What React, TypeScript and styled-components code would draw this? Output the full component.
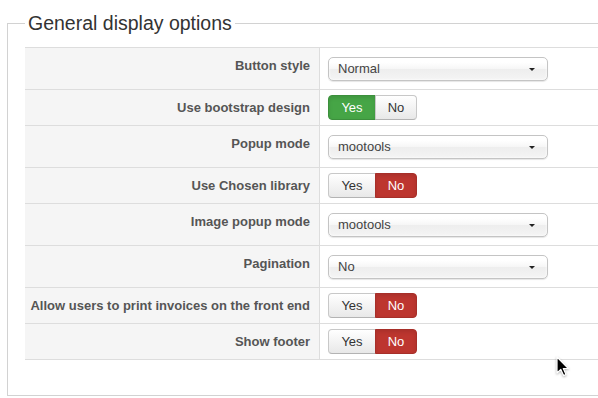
import styled, { createGlobalStyle, css } from 'styled-components';

const GlobalStyle = createGlobalStyle`
	html, body {
		margin: 0;
		padding: 0;
		overflow: hidden;
		background: #fff;
		font-family: 'Liberation Sans', Arial, Helvetica, sans-serif;
	}
`;

type Option =
	| { label: string; kind: 'select'; value: string }
	| { label: string; kind: 'toggle'; value: 'yes' | 'no'; yesColor?: 'green' };

const options: Option[] = [
	{ label: 'Button style', kind: 'select', value: 'Normal' },
	{ label: 'Use bootstrap design', kind: 'toggle', value: 'yes' },
	{ label: 'Popup mode', kind: 'select', value: 'mootools' },
	{ label: 'Use Chosen library', kind: 'toggle', value: 'no' },
	{ label: 'Image popup mode', kind: 'select', value: 'mootools' },
	{ label: 'Pagination', kind: 'select', value: 'No' },
	{ label: 'Allow users to print invoices on the front end', kind: 'toggle', value: 'no' },
	{ label: 'Show footer', kind: 'toggle', value: 'no' },
];

function App() {
	return (
		<>
			<GlobalStyle />
			<Fieldset>
				<Legend>General display options</Legend>
				<Table>
					{options.map((opt) => (
						<Row key={opt.label} $tall={opt.kind === 'select'}>
							<LabelCell>{opt.label}</LabelCell>
							<ControlCell>
								{opt.kind === 'select' ? (
									<Select>
										<span>{opt.value}</span>
										<Caret />
									</Select>
								) : (
									<ToggleGroup>
										<ToggleButton $state={opt.value === 'yes' ? 'yes' : 'off'} $first>
											Yes
										</ToggleButton>
										<ToggleButton $state={opt.value === 'no' ? 'no' : 'off'}>
											No
										</ToggleButton>
									</ToggleGroup>
								)}
							</ControlCell>
						</Row>
					))}
				</Table>
			</Fieldset>
			<Cursor width='14' height='22' viewBox='0 0 14 22'>
				<path
					d='M1 1 L1 17 L4.8 13.4 L7.6 19.6 L10 18.5 L7.3 12.5 L12.4 12.5 Z'
					fill='#000'
					stroke='#fff'
					strokeWidth='1.2'
					strokeLinejoin='round'
				/>
			</Cursor>
		</>
	);
}

export default App;

const Fieldset = styled.fieldset`
	margin: 11px 0 0 7px;
	padding: 12px 0 35px 17px;
	border: 1px solid #d2d2d2;
	width: 640px;
	min-width: 0;
`;

const Legend = styled.legend`
	font-size: 19.5px;
	line-height: 24px;
	color: #333;
	padding: 0 3px;
`;

const Table = styled.div`
	display: flex;
	flex-direction: column;
	border-top: 1px solid #ddd;
`;

const Row = styled.div<{ $tall: boolean }>`
	display: grid;
	grid-template-columns: 295px 1fr;
	height: ${(p) => (p.$tall ? 42 : 36)}px;
	box-sizing: border-box;
	border-bottom: 1px solid #ddd;
`;

const LabelCell = styled.div`
	background: #f5f5f5;
	border-right: 1px solid #ddd;
	text-align: right;
	padding: 9px 9px 0 0;
	font-size: 13px;
	line-height: 18px;
	font-weight: bold;
	color: #555;
	white-space: nowrap;
`;

const ControlCell = styled.div`
	display: flex;
	align-items: center;
	padding-left: 8px;
`;

const Select = styled.div`
	box-sizing: border-box;
	width: 220px;
	height: 24px;
	display: flex;
	align-items: center;
	justify-content: space-between;
	padding: 0 12px 0 9px;
	border: 1px solid #c4c4c4;
	border-radius: 5px;
	background: linear-gradient(#fff 20%, #f6f6f6 50%, #eee 52%, #f4f4f4 100%);
	box-shadow: inset 0 0 3px #fff, 0 1px 1px rgba(0, 0, 0, 0.1);
	font-size: 13px;
	color: #444;
`;

const Caret = styled.span`
	width: 0;
	height: 0;
	border-left: 3px solid transparent;
	border-right: 3px solid transparent;
	border-top: 3px solid #222;
	margin-top: 2px;
`;

const ToggleGroup = styled.div`
	display: inline-flex;
`;

const stateStyles = {
	off: css`
		background: linear-gradient(#fff, #e8e8e8);
		color: #333;
		border-color: #c8c8c8 #c8c8c8 #b3b3b3;
		box-shadow: inset 0 1px 0 rgba(255, 255, 255, 0.2);
	`,
	yes: css`
		background: #46a546;
		color: #fff;
		border-color: #3c8f3c;
		box-shadow: inset 0 2px 4px rgba(0, 0, 0, 0.1);
	`,
	no: css`
		background: #bd362f;
		color: #fff;
		border-color: #a72f29;
		box-shadow: inset 0 2px 4px rgba(0, 0, 0, 0.1);
	`,
};

const ToggleButton = styled.div<{ $state: 'off' | 'yes' | 'no'; $first?: boolean }>`
	box-sizing: border-box;
	height: 25px;
	width: ${(p) => (p.$first ? 48 : 42)}px;
	display: flex;
	align-items: center;
	justify-content: center;
	font-size: 13px;
	border: 1px solid;
	border-radius: ${(p) => (p.$first ? '4px 0 0 4px' : '0 4px 4px 0')};
	${(p) => (p.$first ? '' : 'margin-left: -1px;')}
	${(p) => stateStyles[p.$state]}
`;

const Cursor = styled.svg`
	position: absolute;
	left: 556px;
	top: 356px;
	filter: drop-shadow(0 1px 1px rgba(0, 0, 0, 0.3));
`;
